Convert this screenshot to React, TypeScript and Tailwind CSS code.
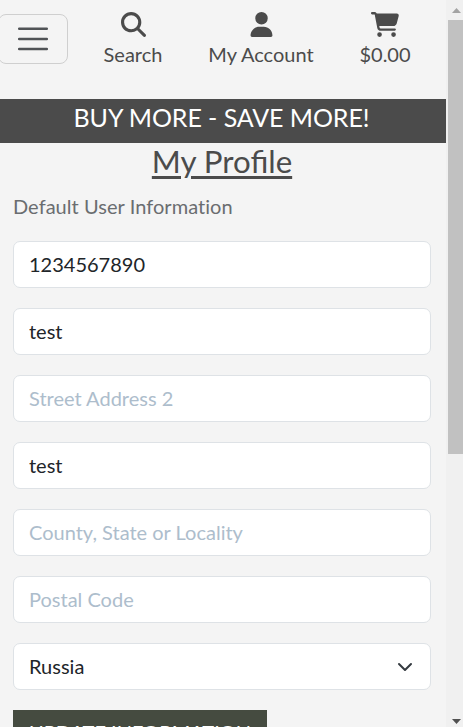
import type { ReactNode } from "react";
import { FaMagnifyingGlass, FaUser, FaCartShopping } from "react-icons/fa6";

function NavItem({ icon, label, className }: { icon: ReactNode; label: string; className: string }) {
  return (
    <a className={`flex flex-col items-center whitespace-nowrap ${className}`}>
      <span className="flex h-[25px] items-center">{icon}</span>
      <span className="mt-[2px] leading-[30px]">{label}</span>
    </a>
  );
}

const fieldClass =
  "block h-[47px] w-full appearance-none rounded-[7px] border border-[#dee2e6] bg-white px-[15px] pb-[2px] text-[20px] leading-[30px] text-[#212529] placeholder:text-[#adbdcc] outline-none";

const fields = [
  { placeholder: "Phone", value: "1234567890" },
  { placeholder: "Street Address 1", value: "test" },
  { placeholder: "Street Address 2", value: "" },
  { placeholder: "City", value: "test" },
  { placeholder: "County, State or Locality", value: "" },
  { placeholder: "Postal Code", value: "" },
];

function Scrollbar() {
  return (
    <div className="flex h-full w-[17px] shrink-0 flex-col items-end bg-[#f0f0f0]">
      <svg className="h-5 w-[15px] shrink-0" viewBox="0 0 15 20">
        <path d="M4 13h9L8.500 8z" fill="#a3a3a3" />
      </svg>
      <div className="h-[434px] w-[15px] shrink-0 bg-[#c1c1c1]" />
      <svg className="mt-auto h-5 w-[15px] shrink-0" viewBox="0 0 15 20">
        <path d="M4 12h9l-4.500 5z" fill="#505050" />
      </svg>
    </div>
  );
}

export default function App() {
  return (
    <div className="flex h-[727px] w-[463px] overflow-hidden bg-[#f4f4f4] font-['Lato',sans-serif] text-[20px] text-[#4b4b4b]">
      <div className="flex h-full w-[446px] shrink-0 flex-col overflow-hidden">
        <header className="flex h-[99px] shrink-0 items-start">
          <button className="-ml-[2px] mt-[14px] flex h-[50px] w-[70px] shrink-0 items-center justify-center rounded-[8px] border border-[#cfcfcf]">
            <svg width="32" height="32" viewBox="0 0 32 32" fill="none" stroke="#505356" strokeWidth="2.500" strokeLinecap="round">
              <path d="M2.200 5.700h27.600M2.200 15.900h27.600M2.200 26.100h27.600" />
            </svg>
          </button>
          <NavItem className="ml-[35px] mt-3 w-[60px]" icon={<FaMagnifyingGlass size={25} />} label="Search" />
          <NavItem className="ml-[45px] mt-3 w-[106px]" icon={<FaUser size={25} />} label="My Account" />
          <NavItem className="ml-[46px] mt-3 w-[50px]" icon={<FaCartShopping size={25} className="w-7" />} label="$0.00" />
        </header>
        <div className="h-[44px] shrink-0 bg-[#4b4b4b] pr-[3px] text-center text-[25px] leading-[36px] tracking-[-0.08px] text-white">
          BUY MORE - SAVE MORE!
        </div>
        <main className="pl-[13px] pr-[15px]">
          <h1 className="h-[48px] text-center text-[31.250px] leading-[36px] underline decoration-[3px] underline-offset-[3px]">My Profile</h1>
          <p className="h-[50px] leading-[30px] tracking-[0.05px] text-[#6a6d70] [font-variant-ligatures:none]">Default User Information</p>
          <form className="flex flex-col items-start gap-5">
            {fields.map((field) => (
              <input key={field.placeholder} className={fieldClass} placeholder={field.placeholder} defaultValue={field.value} />
            ))}
            <div className="flex h-[47px] w-full items-center justify-between rounded-[7px] border border-[#dee2e6] bg-white pl-[15px] pr-[17px] text-[#212529]">
              <span className="pb-[2px]">Russia</span>
              <svg width="16" height="16" viewBox="0 0 16 16" fill="none" stroke="#343a40" strokeWidth="2" strokeLinecap="round" strokeLinejoin="round">
                <path d="m2 5 6 6 6-6" />
              </svg>
            </div>
            <button type="button" className="h-[46px] w-[254px] whitespace-nowrap bg-[#454b40] pb-[2px] text-[20px] leading-[30px] text-white">
              UPDATE INFORMATION
            </button>
          </form>
        </main>
      </div>
      <Scrollbar />
    </div>
  );
}
